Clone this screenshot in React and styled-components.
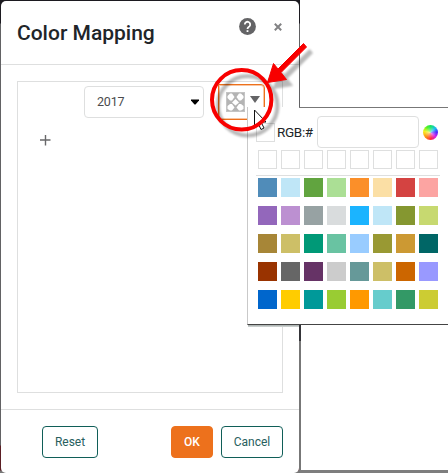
import React from 'react';
import styled, { createGlobalStyle } from 'styled-components';

const Global = createGlobalStyle`
  * { box-sizing: border-box; }
  body { margin: 0; background: #fff; font-family: Roboto, "Liberation Sans", sans-serif; }
`;

const Page = styled.div`
  position: relative;
  width: 448px;
  height: 473px;
  overflow: hidden;
  background: #fff;
`;

const Backdrop = styled.div`
  width: 300px;
  height: 473px;
  padding: 1px 1px 0;
  background: linear-gradient(#1c1a20 0 23px, #626264 24px 445px, #5b1e24 446px 470px, #777 471px);
`;

const Dialog = styled.div`
  display: flex;
  flex-direction: column;
  width: 298px;
  height: 472px;
  background: #fff;
  border-radius: 5px;
`;

const Header = styled.header`
  display: flex;
  align-items: center;
  height: 64px;
  padding: 0 17px 0 16px;
  border-bottom: 1px solid #dedfdf;
`;

const Title = styled.h1`
  flex: 1;
  margin: 0;
  font-size: 21px;
  line-height: 28px;
  font-weight: 500;
  letter-spacing: 0;
  white-space: nowrap;
  color: #212529;
`;

const HeaderIcons = styled.div`
  display: flex;
  align-items: center;
  gap: 18px;
  margin-bottom: 12px;
`;

const Body = styled.main`
  height: 345px;
  padding: 16px;
  border-bottom: 1px solid #dedfdf;
`;

const MappingPane = styled.section`
  width: 266px;
  height: 312px;
  border: 1px solid #dedfdf;
`;

const MappingRow = styled.div`
  display: flex;
  gap: 14px;
  padding: 2px 0 0 66px;
`;

const Select = styled.div`
  display: flex;
  align-items: center;
  justify-content: space-between;
  width: 120px;
  height: 32px;
  margin-top: 2px;
  padding: 0 4px 2px 12px;
  border: 1px solid #dedfdf;
  border-radius: 4px;
  font-size: 12.5px;
  letter-spacing: -0.2px;
  color: #4b4b4d;
`;

const SelectArrow = styled.svg`
  margin-top: 2px;
`;

const ColorButton = styled.div`
  display: flex;
  align-items: flex-start;
  gap: 5px;
  width: 47px;
  height: 36px;
  padding: 7px 0 0 7px;
  border: 1px solid #ed711c;
  border-radius: 0 4px 4px 0;
  box-shadow: inset 0 0 0 1px rgba(237, 113, 28, 0.4);
`;

const AddButton = styled.div`
  display: flex;
  width: 12px;
  height: 12px;
  margin: 14px 0 0 22px;
`;

const Footer = styled.footer`
  display: flex;
  padding: 16px 16px 0 41px;
`;

const Button = styled.button`
  width: ${p => p.$width}px;
  height: 32px;
  padding: 0;
  margin-right: ${p => p.$after || 0}px;
  border: 1px solid ${p => (p.$primary ? '#ed711c' : '#105e58')};
  border-radius: 4px;
  background: ${p => (p.$primary ? '#ed711c' : '#fff')};
  color: ${p => (p.$primary ? '#fff' : '#28605e')};
  font: ${p => (p.$primary ? 500 : 400)} 12px Roboto, sans-serif;
`;

const SideEdge = styled.div`
  position: absolute;
  left: 299px;
  top: ${p => p.$top}px;
  width: ${p => p.$width}px;
  height: ${p => p.$height}px;
  background: ${p => p.$color};
`;

const BottomEdge = styled(SideEdge)`
  left: 300px;
`;

const Picker = styled.div`
  position: absolute;
  left: 247px;
  top: 107px;
  width: 201px;
  height: 218px;
  padding: 9px 7px 0 8px;
  background: #fff;
  border-left: 1px solid #c9c9c9;
  border-bottom: 1px solid #444;
`;

const PickerShadow = styled.div`
  position: absolute;
  left: 248px;
  top: 325px;
  width: 51px;
  height: 2px;
  background: linear-gradient(#a4acaa, #d5d9d8);
`;

const HexRow = styled.div`
  display: flex;
  align-items: center;
  height: 32px;
`;

const Swatch = styled.div`
  flex: none;
  width: 19px;
  height: 19px;
  background: ${p => p.$color || '#fff'};
  border: 1px solid ${p => p.$color || '#dedfdf'};
`;

const HexLabel = styled.span`
  width: 40px;
  margin-left: 2px;
  font-size: 13.5px;
  letter-spacing: -0.35px;
  white-space: nowrap;
  color: #212529;
`;

const HexInput = styled.div`
  width: 102px;
  height: 32px;
  margin-right: 4px;
  border: 1px solid #dedfdf;
  border-radius: 4px;
`;

const Wheel = styled.div`
  width: 15px;
  height: 15px;
  border-radius: 50%;
  background:
    radial-gradient(circle, rgba(255,255,255,0.6), rgba(255,255,255,0) 55%),
    conic-gradient(#18e560, #16bdf2 50deg, #4928ff 85deg, #d923e8 130deg, #ff2940 175deg, #ff8a16 225deg, #f7ef20 280deg, #58f322 325deg, #18e560);
`;

const RecentRow = styled.div`
  display: flex;
  gap: 4px;
  margin-top: 2px;
  padding: 0 0 6px 2px;
  border-bottom: 1px solid #dedfdf;
  width: 184px;
`;

const Palette = styled.div`
  display: grid;
  grid-template-columns: repeat(8, 19px);
  gap: 9px 4px;
  padding: 2px 0 0 2px;
`;

const Annotation = styled.svg`
  position: absolute;
  left: 205px;
  top: 30px;
`;

const palette = [
  '#508cb9', '#bfe6f7', '#61a43f', '#abdf95', '#fb8f29', '#fbdfa5', '#d44341', '#fca4a2',
  '#9367bb', '#bc90d1', '#97a2a3', '#d9dcdd', '#1bb4ff', '#bfe6f7', '#859730', '#c7d970',
  '#a78637', '#cdbf67', '#009977', '#69c3a2', '#99ccff', '#999933', '#cc9933', '#006666',
  '#993300', '#666666', '#663366', '#cccccc', '#669999', '#cdbf67', '#cc6600', '#9999ff',
  '#0066cc', '#ffcc00', '#009999', '#99cc33', '#ff9900', '#66cccc', '#339966', '#cccc33',
];

const HelpIcon = () => (
  <svg width="17" height="17" viewBox="0 0 17 17">
    <circle cx="8.5" cy="8.5" r="8.4" fill="#646466" />
    <path d="M5.8 6.5a2.7 2.7 0 1 1 4.6 1.9C9.2 9.4 8.5 9.6 8.5 11.1" fill="none" stroke="#fff" strokeWidth="1.8" />
    <rect x="7.6" y="12.2" width="1.8" height="1.8" fill="#fff" />
  </svg>
);

const CloseIcon = () => (
  <svg width="8" height="8" viewBox="0 0 8 8">
    <path d="M0.8 0.8 7.2 7.2M7.2 0.8 0.8 7.2" stroke="#828284" strokeWidth="2" />
  </svg>
);

const CheckerIcon = () => (
  <svg width="19" height="20" viewBox="0 0 19 20">
    <rect x=".5" y=".5" width="18" height="19" fill="#b4b4b4" stroke="#c4c4c4" />
    <path
      d="M4 1.500h2L8.500 5 6 8.500H4L1.500 6V4ZM13 1.500h2L17.500 4v2L15 8.500H13L10.500 5ZM9.500 7l3.500 3.500-3.500 3-3.500-3ZM4 12h2l2.500 3.500L6 18.500H4L1.500 17v-3ZM13 12h2l2.500 2v3L15 18.500H13l-2.500-3Z"
      fill="#fff"
    />
  </svg>
);

const arrowPath = 'M98.5 13.500 101.500 17 76 42.500 81.500 49.500 62.500 52.500 68.500 33.500 73 39Z';

export default function App() {
  return (
    <Page>
      <Global />
      <Backdrop>
        <Dialog>
          <Header>
            <Title>Color Mapping</Title>
            <HeaderIcons><HelpIcon /><CloseIcon /></HeaderIcons>
          </Header>
          <Body>
            <MappingPane>
              <MappingRow>
                <Select>
                  2017
                  <SelectArrow width="8" height="6" viewBox="0 0 8 6"><path d="M0 .5h8v1L4.500 5.500h-1L0 1.500Z" fill="#000" /></SelectArrow>
                </Select>
                <ColorButton>
                  <CheckerIcon />
                  <svg width="10" height="12" viewBox="0 0 10 12"><path d="M0 4h10L5 11Z" fill="#646466" /></svg>
                </ColorButton>
              </MappingRow>
              <AddButton>
                <svg width="12" height="12" viewBox="0 0 12 12"><path d="M0 6h10.500M5.500 1v10.500" stroke="#68686a" strokeWidth="1.4" /></svg>
              </AddButton>
            </MappingPane>
          </Body>
          <Footer>
            <Button $width={56} $after={73}>Reset</Button>
            <Button $width={42} $after={8} $primary>OK</Button>
            <Button $width={62}>Cancel</Button>
          </Footer>
        </Dialog>
      </Backdrop>
      <SideEdge $top={325} $width={2} $height={16} $color="#343438" />
      <SideEdge $top={341} $width={2} $height={132} $color="#777" />
      <BottomEdge $top={470} $width={148} $height={3} $color="#7e7e7e" />
      <PickerShadow />
      <Picker>
        <HexRow>
          <Swatch />
          <HexLabel>RGB:#</HexLabel>
          <HexInput />
          <Wheel />
        </HexRow>
        <RecentRow>{Array.from({ length: 8 }, (_, i) => <Swatch key={i} />)}</RecentRow>
        <Palette>{palette.map((c, i) => <Swatch key={i} $color={c} />)}</Palette>
      </Picker>
      <SideEdge $top={107} $width={149} $height={1} $color="#777" />
      <Annotation width="125" height="115" viewBox="0 0 125 115">
        <defs>
          <filter id="soft" x="-20%" y="-20%" width="140%" height="140%"><feGaussianBlur stdDeviation="1" /></filter>
        </defs>
        <g transform="translate(6 6)" opacity=".27" filter="url(#soft)">
          <circle cx="36.700" cy="69.800" r="29.700" fill="none" stroke="#000" strokeWidth="4.200" />
          <path d={arrowPath} stroke="#000" />
        </g>
        <path d="M49.5 80v16l3.5-3 3 6.5 3-1.5-3-6h5Z" fill="#fff" stroke="#111" />
        <circle cx="36.700" cy="69.800" r="29.700" fill="none" stroke="#f80000" strokeWidth="4" />
        <path d={arrowPath} fill="#f80000" stroke="#f80000" strokeLinejoin="round" />
      </Annotation>
    </Page>
  );
}
